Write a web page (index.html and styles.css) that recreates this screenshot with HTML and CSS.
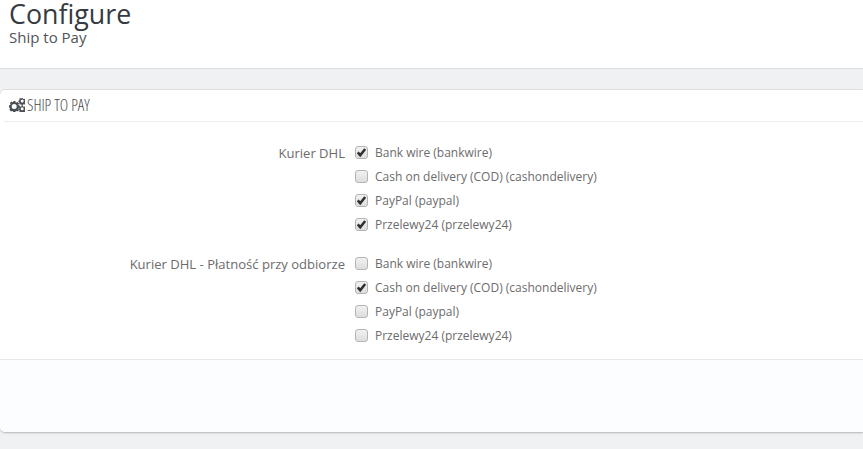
FILE: index.html
```html
<!DOCTYPE html>
<html lang="en">
<head>
<meta charset="utf-8">
<title>Configure</title>
<link rel="stylesheet" href="styles.css">
</head>
<body>
<header class="page-head">
  <h1 class="title">Configure</h1>
  <div class="subtitle">Ship to Pay</div>
</header>
<main class="content">
  <section class="panel">
    <div class="panel-head">
      <svg class="cogs" viewBox="0 0 16 14" width="16" height="14" aria-hidden="true">
        <g fill="#4a4f55">
          <path fill-rule="evenodd" d="M4.2 3h2.1l.3 1.2.9.4 1.1-.7 1.5 1.5-.7 1.1.4.9 1.2.3v2.1l-1.2.3-.4.9.7 1.1-1.5 1.5-1.1-.7-.9.4-.3 1.2H4.2l-.3-1.2-.9-.4-1.1.7L.4 11.8l.7-1.1-.4-.9L0 9.5V7.4l1.2-.3.4-.9-.7-1.1 1.5-1.5 1.1.7.9-.4zM5.2 5.9a2.5 2.5 0 1 0 0 5 2.5 2.5 0 0 0 0-5z"/>
          <path fill-rule="evenodd" d="M12.6 0h1.2l.2.8.6.3.8-.4.8.8-.4.8.3.6.8.2v1.2l-.8.2-.3.6.4.8-.8.8-.8-.4-.6.3-.2.8h-1.2l-.2-.8-.6-.3-.8.4-.8-.8.4-.8-.3-.6-.8-.2V2.5l.8-.2.3-.6-.4-.8.8-.8.8.4.6-.3zM13.2 1.6a1.5 1.5 0 1 0 0 3 1.5 1.5 0 0 0 0-3z"/>
          <path fill-rule="evenodd" d="M12.6 7.6h1.2l.2.8.6.3.8-.4.8.8-.4.8.3.6.8.2v1.2l-.8.2-.3.6.4.8-.8.8-.8-.4-.6.3-.2.8h-1.2l-.2-.8-.6-.3-.8.4-.8-.8.4-.8-.3-.6-.8-.2v-1.2l.8-.2.3-.6-.4-.8.8-.8.8.4.6-.3zM13.2 9.2a1.5 1.5 0 1 0 0 3 1.5 1.5 0 0 0 0-3z"/>
        </g>
      </svg>
      <span class="panel-title">SHIP TO PAY</span>
    </div>
    <div class="form">
      <div class="group">
        <div class="group-label">Kurier DHL</div>
        <ul class="options">
          <li class="option"><span class="cb"><svg viewBox="0 0 13 13" width="13" height="13"><path d="M2.8 6.4 5.2 9.2 10.2 3" /></svg></span>Bank wire (bankwire)</li>
          <li class="option"><span class="cb"></span>Cash on delivery (COD) (cashondelivery)</li>
          <li class="option"><span class="cb"><svg viewBox="0 0 13 13" width="13" height="13"><path d="M2.8 6.4 5.2 9.2 10.2 3" /></svg></span>PayPal (paypal)</li>
          <li class="option"><span class="cb"><svg viewBox="0 0 13 13" width="13" height="13"><path d="M2.8 6.4 5.2 9.2 10.2 3" /></svg></span>Przelewy24 (przelewy24)</li>
        </ul>
      </div>
      <div class="group">
        <div class="group-label">Kurier DHL - Płatność przy odbiorze</div>
        <ul class="options">
          <li class="option"><span class="cb"></span>Bank wire (bankwire)</li>
          <li class="option"><span class="cb"><svg viewBox="0 0 13 13" width="13" height="13"><path d="M2.8 6.4 5.2 9.2 10.2 3" /></svg></span>Cash on delivery (COD) (cashondelivery)</li>
          <li class="option"><span class="cb"></span>PayPal (paypal)</li>
          <li class="option"><span class="cb"></span>Przelewy24 (przelewy24)</li>
        </ul>
      </div>
    </div>
    <div class="panel-foot"></div>
  </section>
</main>
</body>
</html>
```
FILE: styles.css
```css
* { box-sizing: border-box; }
html, body { margin: 0; padding: 0; height: 100%; overflow: hidden; }
body {
  background: #eff1f2;
  font-family: "Open Sans", sans-serif;
  color: #666;
}
.page-head {
  height: 69px;
  background: #fff;
  border-bottom: 1px solid #d9dcde;
  padding-left: 9px;
}
.title {
  margin: 0;
  font-size: 26.8px;
  font-weight: 400;
  line-height: 28px;
  color: #363a41;
}
.subtitle {
  font-size: 15px;
  line-height: 18px;
  color: #4f5357;
}
.content { padding-top: 21px; }
.panel {
  height: 342px;
  background: #fff;
  border-radius: 5px 0 0 5px;
  box-shadow: 0 1px 2px rgba(0, 0, 0, .25), 0 -1px 0 #e0e2e4;
  display: flex;
  flex-direction: column;
}
.panel-head {
  height: 32px;
  margin-left: 4px;
  padding-left: 5px;
  padding-bottom: 2px;
  border-bottom: 1px solid #eeeeee;
  display: flex;
  align-items: center;
  gap: 2px;
}
.panel-title {
  font-size: 16px;
  font-weight: 300;
  font-stretch: condensed;
  color: #4a4a4a;
}
.form {
  flex: 1;
  padding-top: 18px;
  display: flex;
  flex-direction: column;
  gap: 15px;
}
.group { display: flex; }
.group-label {
  width: 345px;
  text-align: right;
  font-size: 13.05px;
  line-height: 26px;
  color: #6c6c6c;
}
.options {
  list-style: none;
  margin: 0;
  padding: 0 0 0 10px;
}
.option {
  height: 24px;
  display: flex;
  align-items: center;
  font-size: 12px;
  color: #6c6c6c;
}
.cb {
  width: 13px;
  height: 13px;
  margin-right: 7px;
  border: 1px solid #b4b4b4;
  border-radius: 3px;
  background: linear-gradient(#f1f1f1, #dedede);
  display: flex;
  align-items: center;
  justify-content: center;
}
.cb svg {
  flex: none;
  margin: -1px;
}
.cb path {
  fill: none;
  stroke: #2e2e2e;
  stroke-width: 2.5;
}
.panel-foot {
  height: 73px;
  background: #fcfdfe;
  border-top: 1px solid #e8e8e8;
  border-radius: 0 0 0 5px;
}
```
